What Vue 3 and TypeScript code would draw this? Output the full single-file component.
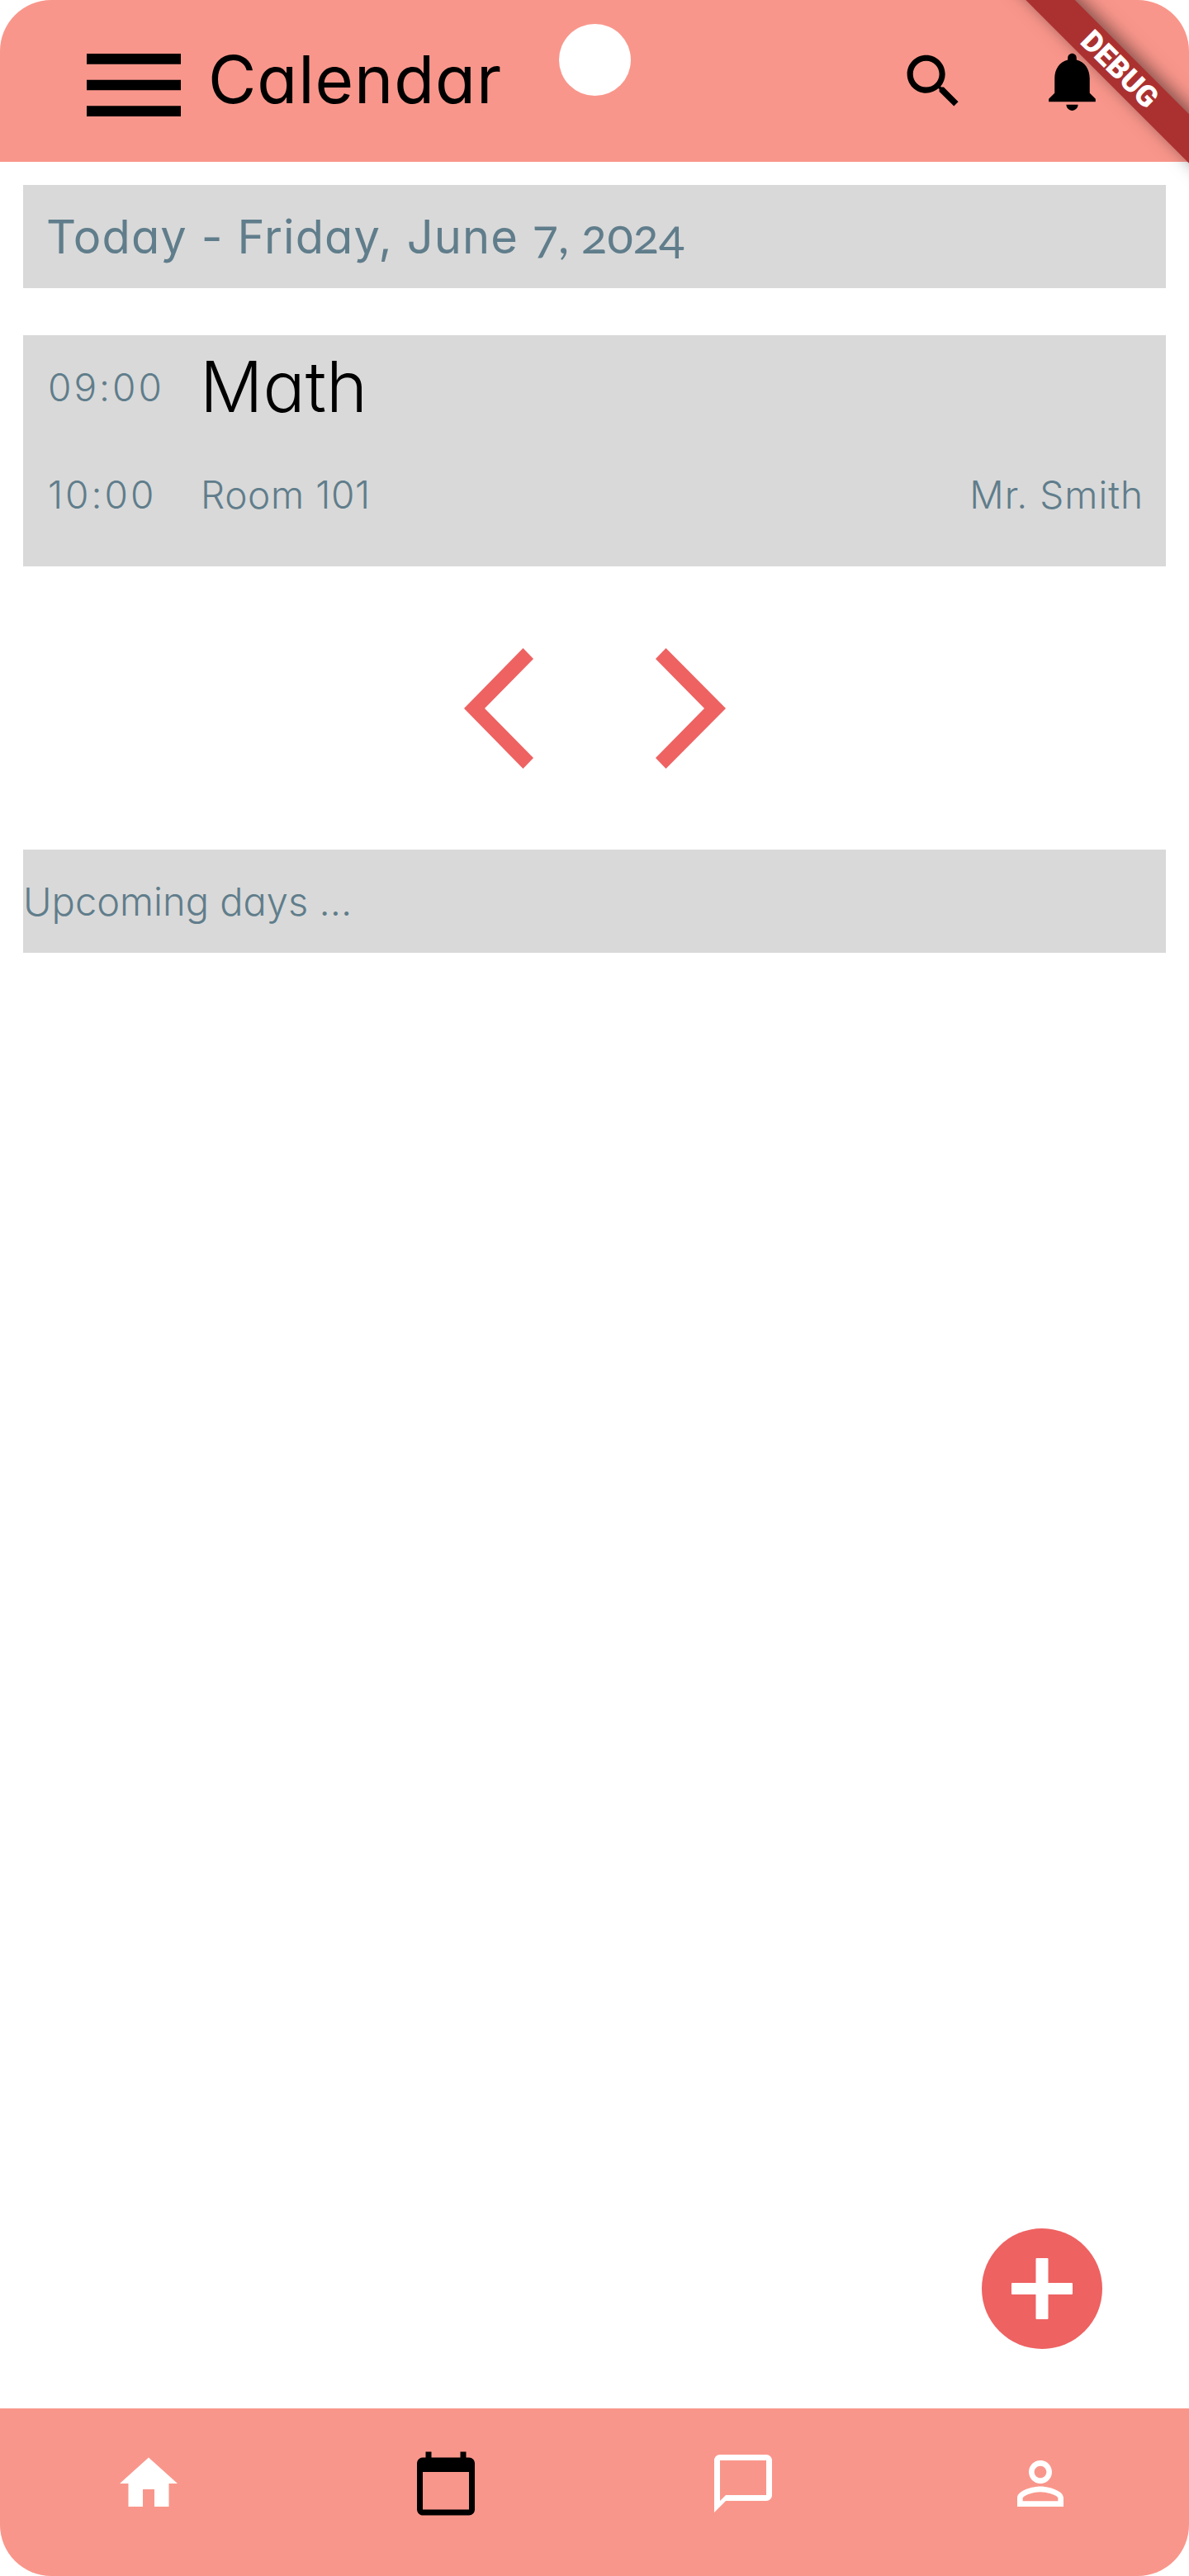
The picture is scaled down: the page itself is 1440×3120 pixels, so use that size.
<script setup lang="ts">
const menu = "M3 18h18v-2H3v2zm0-5h18v-2H3v2zm0-7v2h18V6H3z";
const search = "M15.5 14h-.79l-.28-.27C15.41 12.59 16 11.11 16 9.5 16 5.91 13.09 3 9.5 3S3 5.91 3 9.5 5.91 16 9.5 16c1.61 0 3.09-.59 4.23-1.57l.27.28v.79l5 4.99L20.49 19l-4.99-5zm-6 0C7.01 14 5 11.99 5 9.5S7.01 5 9.5 5 14 7.01 14 9.5 11.99 14 9.5 14z";
const bell = "M12 22c1.1 0 2-.9 2-2h-4c0 1.1.89 2 2 2zm6-6v-5c0-3.07-1.64-5.64-4.5-6.32V4c0-.83-.67-1.5-1.5-1.5s-1.5.67-1.5 1.5v.68C7.63 5.36 6 7.92 6 11v5l-2 2v1h16v-1l-2-2z";
const navItems = [
  { d: "M10 20v-6h4v6h5v-8h3L12 3 2 12h3v8z", color: "#ffffff" },
  { d: "M20 3h-1V1h-2v2H7V1H5v2H4c-1.1 0-2 .9-2 2v16c0 1.1.9 2 2 2h16c1.1 0 2-.9 2-2V5c0-1.1-.9-2-2-2zm0 18H4V8h16v13z", color: "#000000" },
  { d: "M20 2H4c-1.1 0-2 .9-2 2v18l4-4h14c1.1 0 2-.9 2-2V4c0-1.1-.9-2-2-2zm0 14H6l-2 2V4h16v12z", color: "#ffffff" },
  { d: "M12 5.9c1.16 0 2.1.94 2.1 2.1s-.94 2.1-2.1 2.1S9.9 9.16 9.9 8s.94-2.1 2.1-2.1m0 9c2.97 0 6.1 1.46 6.1 2.1v1.1H5.9V17c0-.64 3.13-2.1 6.1-2.1M12 4C9.79 4 8 5.79 8 8s1.79 4 4 4 4-1.79 4-4-1.79-4-4-4zm0 9c-2.67 0-8 1.34-8 4v3h16v-3c0-2.66-5.33-4-8-4z", color: "#ffffff" },
];
</script>

<template>
  <div class="screen">
    <header class="appbar">
      <svg class="menu" viewBox="3 6 18 12" preserveAspectRatio="none"><path :d="menu" /></svg>
      <h1 class="title">Calendar</h1>
      <svg class="action search" viewBox="0 0 24 24"><path :d="search" /></svg>
      <svg class="action bell" viewBox="0 0 24 24"><path :d="bell" /></svg>
    </header>

    <main class="content">
      <div class="bar today"><span>Today - Friday, June <span class="oldstyle">7, 2024</span></span></div>

      <section class="lesson">
        <div class="lesson-row first">
          <span class="time">09:00</span>
          <span class="subject">Math</span>
        </div>
        <div class="lesson-row second">
          <span class="time">10:00</span>
          <span class="room">Room 101</span>
          <span class="teacher">Mr. Smith</span>
        </div>
      </section>

      <div class="pager">
        <svg class="chev" width="84" height="146" viewBox="0 0 84 146"><polygon points="71.5,0 84,13 25,73 84,133 71.5,146 0,73" /></svg>
        <svg class="chev" width="85" height="146" viewBox="0 0 85 146"><polygon points="12.5,0 0,13 59,73 0,133 12.5,146 85,73" /></svg>
      </div>

      <div class="bar upcoming">Upcoming days ...</div>
    </main>

    <nav class="bottom">
      <div v-for="item in navItems" :key="item.d" class="nav-cell">
        <svg class="nav-icon" viewBox="0 0 24 24"><path :d="item.d" :fill="item.color" /></svg>
      </div>
    </nav>

    <button class="fab" type="button" aria-label="Add">
      <svg width="74" height="74" viewBox="0 0 74 74"><path d="M29.5 1a1 1 0 0 1 1-1h13a1 1 0 0 1 1 1v29h28.500a1 1 0 0 1 1 1v12a1 1 0 0 1-1 1H44.500v29a1 1 0 0 1-1 1h-13a1 1 0 0 1-1-1V44H1a1 1 0 0 1-1-1V31a1 1 0 0 1 1-1h28.500z" fill="#fff" /></svg>
    </button>

    <div class="camera"></div>
    <div class="ribbon-clip">
      <div class="ribbon">DEBUG</div>
    </div>
  </div>
</template>

<style>
html, body { margin: 0; padding: 0; background: #fff; }
</style>

<style scoped>
.screen {
  position: relative;
  width: 1440px;
  height: 3120px;
  display: flex;
  flex-direction: column;
  overflow: hidden;
  border-radius: 62px;
  background: #fff;
  font-family: Inter, "Noto Sans", sans-serif;
  font-feature-settings: "cv11" 1;
}
.appbar {
  height: 196px;
  flex: none;
  box-sizing: border-box;
  background: #f9968b;
  display: flex;
  align-items: center;
  padding-left: 105px;
  color: #000;
}
.menu { width: 114px; height: 76px; margin-top: 10px; flex: none; }
.title {
  margin: -4px 0 0 33px;
  font-size: 80px;
  line-height: 1;
  font-weight: 400;
  letter-spacing: 0.9px;
}
.action { position: absolute; width: 85px; height: 85px; top: 56px; }
.search { left: 1088px; }
.bell { left: 1256px; }
.content {
  flex: 1;
  padding: 28px 28px 0;
  display: flex;
  flex-direction: column;
}
.bar {
  background: #d9d9d9;
  height: 125px;
  box-sizing: border-box;
  display: flex;
  align-items: center;
  color: #607d8b;
}
.today { padding: 0 0 3px 28px; font-size: 56px; font-weight: 400; letter-spacing: 1.1px; }
.oldstyle { font-size: 58px; letter-spacing: 0; font-family: Lato, sans-serif; font-feature-settings: "onum" 1; }
.lesson {
  margin-top: 57px;
  height: 280px;
  background: #d9d9d9;
  padding: 0 27px 0 30px;
  display: flex;
  flex-direction: column;
  position: relative;
}
.lesson-row { display: flex; align-items: center; }
.first { height: 125px; }
.second { height: 50px; margin-top: 43px; }
.time {
  font-size: 46px;
  font-weight: 300;
  letter-spacing: 3px;
  color: #607d8b;
  width: 186px;
  flex: none;
}
.subject { font-size: 85px; font-weight: 300; color: #000; line-height: 1; margin-left: -2px; }
.room { font-size: 46px; font-weight: 300; letter-spacing: 0.6px; color: #607d8b; margin-left: -1px; }
.teacher { font-size: 46px; font-weight: 300; letter-spacing: 1px; color: #607d8b; margin-left: auto; }
.pager {
  height: 343px;
  display: flex;
  justify-content: center;
  align-items: center;
  gap: 148px;
}
.chev { fill: #ee6262; flex: none; }
.upcoming { font-size: 47px; font-weight: 300; }
.bottom {
  flex: none;
  height: 203px;
  background: #f9968b;
  display: grid;
  grid-template-columns: repeat(4, 1fr);
}
.nav-cell { display: flex; justify-content: center; padding-top: 49px; }
.nav-icon { width: 84px; height: 84px; }
.fab {
  position: absolute;
  left: 1189px;
  top: 2699px;
  width: 146px;
  height: 146px;
  border: 0;
  padding: 0;
  border-radius: 50%;
  background: #ee6262;
  display: flex;
  align-items: center;
  justify-content: center;
}
.camera {
  position: absolute;
  left: 677px;
  top: 29px;
  width: 87px;
  height: 87px;
  border-radius: 50%;
  background: #fff;
}
.ribbon-clip {
  position: absolute;
  top: 0;
  right: 0;
  width: 240px;
  height: 230px;
  overflow: hidden;
  pointer-events: none;
}
.ribbon {
  position: absolute;
  left: -14px;
  top: 63px;
  width: 340px;
  height: 42px;
  transform: rotate(45deg);
  background: #ab3130;
  box-shadow: 0 -5px 21px rgba(0, 0, 0, 0.5);
  color: #fff;
  font-family: Roboto, sans-serif;
  font-feature-settings: normal;
  font-size: 36px;
  font-weight: 900;
  line-height: 42px;
  text-align: center;
}
</style>
